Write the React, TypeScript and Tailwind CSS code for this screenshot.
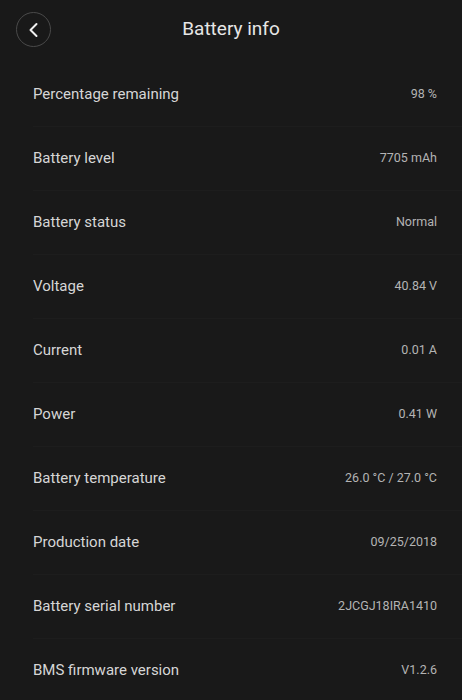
import React from "react";

const rows: [string, string][] = [
  ["Percentage remaining", "98 %"],
  ["Battery level", "7705 mAh"],
  ["Battery status", "Normal"],
  ["Voltage", "40.84 V"],
  ["Current", "0.01 A"],
  ["Power", "0.41 W"],
  ["Battery temperature", "26.0 °C / 27.0 °C"],
  ["Production date", "09/25/2018"],
  ["Battery serial number", "2JCGJ18IRA1410"],
  ["BMS firmware version", "V1.2.6"],
];

export default function App() {
  return (
    <div className="w-[462px] h-[700px] overflow-hidden bg-[#191919] font-['Roboto',sans-serif]">
      <div className="relative h-[63px] flex items-center justify-center">
        <div className="absolute left-[16px] top-[12px] w-[35px] h-[35px] rounded-full border border-[#4a4a4a] flex items-center justify-center">
          <svg width="16" height="16" viewBox="0 0 16 16" fill="none">
            <path d="M10.5 2 L4.5 8 L10.5 14" stroke="#f0f0f0" strokeWidth="2" strokeLinecap="round" strokeLinejoin="round" />
          </svg>
        </div>
        <div className="text-[19px] text-[#e6e6e6] -mt-[5px]">Battery info</div>
      </div>
      <div className="pl-[33px]">
        {rows.map(([k, v]) => (
          <div key={k} className="h-[64px] flex items-center justify-between pr-[25px] border-b border-[#1d1d1d]">
            <span className="text-[15px] text-[#d6d6d6]">{k}</span>
            <span className="text-[12.5px] text-[#b4b4b4]">{v}</span>
          </div>
        ))}
      </div>
    </div>
  );
}
